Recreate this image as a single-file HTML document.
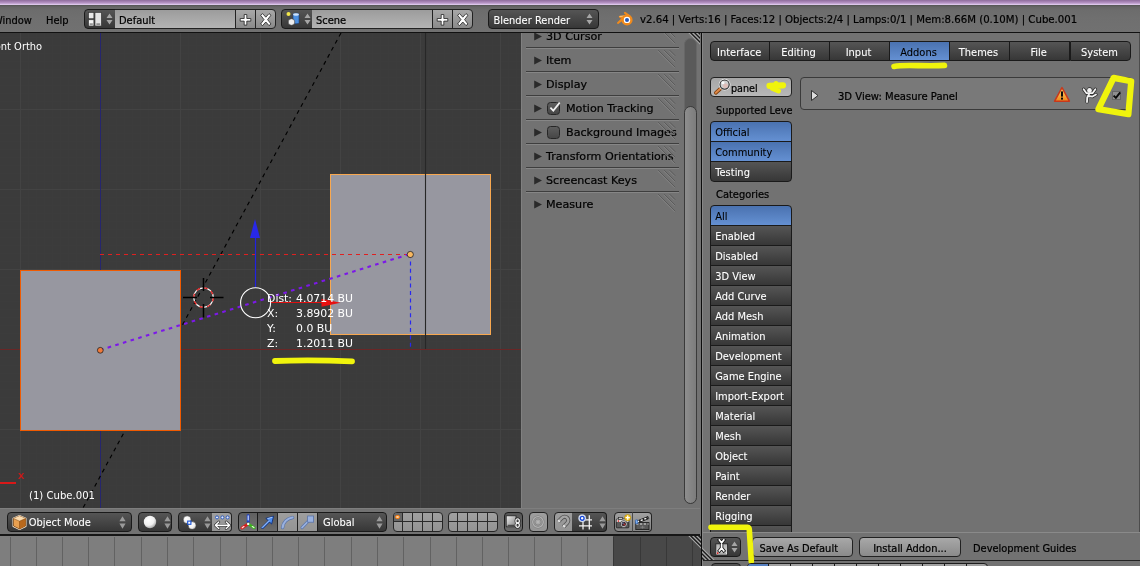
<!DOCTYPE html>
<html><head><meta charset="utf-8"><title>Blender</title>
<style>
html,body{margin:0;padding:0;}
body{width:1140px;height:566px;overflow:hidden;position:relative;background:#727272;font-family:"DejaVu Sans","Liberation Sans",sans-serif;font-size:9.9px;color:#000;-webkit-text-stroke:0.22px;}
.abs{position:absolute;}
#all{position:absolute;left:0;top:0;width:1140px;height:566px;overflow:hidden;filter:blur(0.3px);}
#topband{left:0;top:0;width:1140px;height:5px;background:linear-gradient(#8e6c9c,#b795c6 60%,#dcc6ea 90%,#9a86a4);}
#tophead{left:0;top:5px;width:1140px;height:27px;background:linear-gradient(#545454,#666 2px,#6c6c6c 5px,#6f6f6f 12px,#717171 27px);box-sizing:border-box;}
#topline{left:0;top:31.7px;width:1140px;height:1.6px;background:#111;}
#view3d{left:0;top:33px;width:700px;height:475.5px;background:#3b3b3b;overflow:hidden;}
.w{position:absolute;box-sizing:border-box;border:1px solid #222;height:20px;line-height:21px;font-size:9.9px;white-space:nowrap;overflow:hidden;will-change:transform;}
.menu{background:linear-gradient(#555,#373737);color:#fff;border-color:#1a1a1a;-webkit-text-stroke:0.08px;}
.sel{background:linear-gradient(#4a72b0,#6490d2);color:#000;}
.txt{background:linear-gradient(#9c9c9c,#b4b4b4);color:#000;}
.tool{background:linear-gradient(#a8a8a8,#8a8a8a);color:#000;}
.tog{background:linear-gradient(#a8a8a8,#8a8a8a);}
.rl{border-radius:4px 0 0 4px;}
.rr{border-radius:0 4px 4px 0;}
.ra{border-radius:4px;}
.lbl{position:absolute;white-space:nowrap;font-size:9.9px;line-height:12px;will-change:transform;}
</style></head>
<body><div id="all">
<div id="topband" class="abs"></div>
<div id="tophead" class="abs"></div>
<div id="topline" class="abs"></div>


<div class="lbl" style="left:-7.2px;top:15px;">Window</div>
<div class="lbl" style="left:46.3px;top:15px;">Help</div>
<div class="w menu rl" style="left:83.5px;top:9px;width:32px;"></div>
<svg class="abs" style="left:88.3px;top:11.8px" width="15" height="14.5" viewBox="0 0 14 14" preserveAspectRatio="none"><rect x="0.5" y="0.5" width="5" height="6" fill="#e8e8e8" stroke="#333" stroke-width="0.6"/><rect x="0.5" y="7.5" width="5" height="6" fill="#f4f4f4" stroke="#333" stroke-width="0.6"/><rect x="6.5" y="0.5" width="6" height="13" fill="#e4e4e4" stroke="#333" stroke-width="0.6"/><rect x="1.5" y="11.2" width="3" height="0.9" fill="#444"/><rect x="7.8" y="11.2" width="3.6" height="0.9" fill="#444"/></svg>
<svg class="abs" style="left:105.5px;top:13px" width="7" height="12" viewBox="0 0 7 12"><path d="M3.5 0.5L6.5 5H0.5Z M3.5 11.5L6.5 7H0.5Z" fill="#a6a6a6"/></svg>
<div class="w txt" style="left:114.5px;top:9px;width:121px;padding-left:4px;border-left:none">Default</div>
<div class="w tool" style="left:234.5px;top:9px;width:21px;"></div>
<div class="w tool rr" style="left:254.5px;top:9px;width:20.5px;"></div>
<svg class="abs" style="left:238.5px;top:12.5px" width="34" height="14" viewBox="0 0 34 14"><path d="M5.2 1.5h2.6v4h4v2.6h-4v4h-2.6v-4h-4v-2.6h4z" fill="#fff" stroke="#222" stroke-width="0.8"/><path d="M21.6 2.2l2-1.6 3.2 3.6 3.2-3.6 2 1.6-3.4 4.4 3.4 4.4-2 1.6-3.2-3.6-3.2 3.6-2-1.6 3.4-4.4z" fill="#fff" stroke="#222" stroke-width="0.8"/></svg>
<div class="w menu rl" style="left:280.5px;top:9px;width:32px;"></div>
<svg class="abs" style="left:285.5px;top:11px" width="16" height="16" viewBox="0 0 16 16"><circle cx="2.5" cy="3" r="2" fill="#f2e64a"/><path d="M7 3.5a3 1.3 0 0 1 6 0v8a3 1.3 0 0 1-6 0z" fill="#4c8fe0" stroke="#1b3f7a" stroke-width="0.6"/><ellipse cx="10" cy="3.5" rx="3" ry="1.3" fill="#cfe2fa"/><circle cx="5.5" cy="11" r="3.3" fill="#eee" stroke="#333" stroke-width="0.6"/></svg>
<svg class="abs" style="left:303.5px;top:13px" width="7" height="12" viewBox="0 0 7 12"><path d="M3.5 0.5L6.5 5H0.5Z M3.5 11.5L6.5 7H0.5Z" fill="#a6a6a6"/></svg>
<div class="w txt" style="left:311.5px;top:9px;width:121px;padding-left:4px;border-left:none">Scene</div>
<div class="w tool" style="left:431.5px;top:9px;width:21px;"></div>
<div class="w tool rr" style="left:451.5px;top:9px;width:20.5px;"></div>
<svg class="abs" style="left:435.5px;top:12.5px" width="34" height="14" viewBox="0 0 34 14"><path d="M5.2 1.5h2.6v4h4v2.6h-4v4h-2.6v-4h-4v-2.6h4z" fill="#fff" stroke="#222" stroke-width="0.8"/><path d="M21.6 2.2l2-1.6 3.2 3.6 3.2-3.6 2 1.6-3.4 4.4 3.4 4.4-2 1.6-3.2-3.6-3.2 3.6-2-1.6 3.4-4.4z" fill="#fff" stroke="#222" stroke-width="0.8"/></svg>
<div class="w menu ra" style="left:488px;top:9px;width:111px;padding-left:4.5px;">Blender Render</div>
<svg class="abs" style="left:586px;top:13px" width="7" height="12" viewBox="0 0 7 12"><path d="M3.5 0.5L6.5 5H0.5Z M3.5 11.5L6.5 7H0.5Z" fill="#a6a6a6"/></svg>
<svg class="abs" style="left:616px;top:10px" width="20" height="20" viewBox="0 0 20 20"><g stroke="#f08a1c" stroke-width="2.1" stroke-linecap="round" stroke-linejoin="round" fill="#f08a1c"><path d="M9 2.9L13.6 6.3"/><path d="M3.9 6.7L10.5 6.2L6.6 9.4L2 12.9L7 8.2Z"/></g><path d="M4 6.4L9.6 6" stroke="#ffd9a0" stroke-width="0.8" stroke-linecap="round"/><circle cx="11" cy="9.9" r="4.4" fill="#fff" stroke="#f08a1c" stroke-width="2.4"/><circle cx="11" cy="9.9" r="2" fill="#2458b8"/></svg>
<div class="lbl" style="left:640px;top:14px;font-size:10.16px;">v2.64 | Verts:16 | Faces:12 | Objects:2/4 | Lamps:0/1 | Mem:8.66M (0.10M) | Cube.001</div>

<div id="view3d" class="abs">
<svg class="abs" style="left:0;top:0" width="700" height="475" viewBox="0 33 700 475">
<path d="M28.5 33V508M36.5 33V508M44.5 33V508M52.5 33V508M60.5 33V508M68.5 33V508M76.5 33V508M84.5 33V508M92.5 33V508M108.5 33V508M116.5 33V508M124.5 33V508M132.5 33V508M140.5 33V508M148.5 33V508M156.5 33V508M164.5 33V508M172.5 33V508M188.5 33V508M196.5 33V508M204.5 33V508M212.5 33V508M220.5 33V508M228.5 33V508M236.5 33V508M244.5 33V508M252.5 33V508M268.5 33V508M276.5 33V508M284.5 33V508M292.5 33V508M300.5 33V508M308.5 33V508M316.5 33V508M324.5 33V508M332.5 33V508M348.5 33V508M356.5 33V508M364.5 33V508M372.5 33V508M380.5 33V508M388.5 33V508M396.5 33V508M404.5 33V508M412.5 33V508M428.5 33V508M436.5 33V508M444.5 33V508M452.5 33V508M460.5 33V508M468.5 33V508M476.5 33V508M484.5 33V508M492.5 33V508M508.5 33V508M516.5 33V508M0 37.5H522M0 45.5H522M0 53.5H522M0 61.5H522M0 69.5H522M0 77.5H522M0 85.5H522M0 93.5H522M0 101.5H522M0 117.5H522M0 125.5H522M0 133.5H522M0 141.5H522M0 149.5H522M0 157.5H522M0 165.5H522M0 173.5H522M0 181.5H522M0 197.5H522M0 205.5H522M0 213.5H522M0 221.5H522M0 229.5H522M0 237.5H522M0 245.5H522M0 253.5H522M0 261.5H522M0 277.5H522M0 285.5H522M0 293.5H522M0 301.5H522M0 309.5H522M0 317.5H522M0 325.5H522M0 333.5H522M0 341.5H522M0 357.5H522M0 365.5H522M0 373.5H522M0 381.5H522M0 389.5H522M0 397.5H522M0 405.5H522M0 413.5H522M0 421.5H522M0 437.5H522M0 445.5H522M0 453.5H522M0 461.5H522M0 469.5H522M0 477.5H522M0 485.5H522M0 493.5H522M0 501.5H522" stroke="#3c3c3c" stroke-width="1" fill="none"/>
<path d="M20.5 33V508M180.5 33V508M260.5 33V508M340.5 33V508M420.5 33V508M500.5 33V508M0 109.5H522M0 189.5H522M0 269.5H522M0 429.5H522" stroke="#434343" stroke-width="1" fill="none"/>
<path d="M0 349.5H522" stroke="#6a2626" stroke-width="1"/>
<path d="M100.5 33V508" stroke="#26266e" stroke-width="1"/>
<path d="M341 33L83 508" stroke="#000" stroke-width="1.15" stroke-dasharray="4 4" fill="none"/>
<rect x="20.5" y="270.5" width="160" height="160" fill="#9797a0" stroke="#f05a00" stroke-width="1"/>
<rect x="330.5" y="174.5" width="160" height="160" fill="#9797a0" stroke="#f8a850" stroke-width="1"/>
<path d="M425.5 33V349" stroke="#272727" stroke-width="1.1"/>
<path d="M100 254.5H410" stroke="#e02020" stroke-width="1" stroke-dasharray="4 4"/>
<path d="M410.5 254V349" stroke="#2828f0" stroke-width="1.2" stroke-dasharray="4 3.4"/>
<path d="M100 350L410 254" stroke="#7c18e8" stroke-width="2.1" stroke-dasharray="3.6 4.4"/>
<circle cx="100.3" cy="350.3" r="2.9" fill="#f07838" stroke="#222" stroke-width="0.8"/>
<circle cx="410.3" cy="254.5" r="3.1" fill="#f8b860" stroke="#222" stroke-width="0.8"/>
<path d="M255.5 287V236" stroke="#2222e0" stroke-width="1.2"/><path d="M255 219L260 238H250Z" fill="#2828e8"/>
<path d="M270 302.5H322" stroke="#e01010" stroke-width="1.2"/><path d="M340.5 302.8L321.5 298.8V306.8Z" fill="#e81010"/>
<circle cx="255.6" cy="302.7" r="15" fill="none" stroke="#fff" stroke-width="1.1"/>
<circle cx="203.5" cy="297.6" r="9.8" fill="none" stroke="#fff" stroke-width="1.2"/><circle cx="203.5" cy="297.6" r="9.8" fill="none" stroke="#e01010" stroke-width="1.2" stroke-dasharray="3.85 3.85"/>
<path d="M183 297.6H197M210 297.6H223.5M203.5 278V291M203.5 304V317.5" stroke="#000" stroke-width="1.5"/>
<path d="M0 483H16" stroke="#d81818" stroke-width="2"/>
<path d="M275 361 Q310 359.8 352 361.3" stroke="#f0f40c" stroke-width="5.8" stroke-linecap="round" fill="none"/>
</svg>
<div class="lbl" style="left:-14.3px;top:8.2px;color:#fff;font-size:9.9px;-webkit-text-stroke:0;">Front Ortho</div>
<div class="lbl" style="left:29px;top:456.5px;color:#fff;font-size:10.1px;-webkit-text-stroke:0;">(1) Cube.001</div>
<div class="lbl" style="left:267px;top:259.7px;color:#fff;font-size:10.9px;-webkit-text-stroke:0;">Dist:</div>
<div class="lbl" style="left:296px;top:259.7px;color:#fff;font-size:10.9px;-webkit-text-stroke:0;">4.0714 BU</div>
<div class="lbl" style="left:267px;top:274.7px;color:#fff;font-size:10.9px;-webkit-text-stroke:0;">X:</div>
<div class="lbl" style="left:296px;top:274.7px;color:#fff;font-size:10.9px;-webkit-text-stroke:0;">3.8902 BU</div>
<div class="lbl" style="left:267px;top:289.7px;color:#fff;font-size:10.9px;-webkit-text-stroke:0;">Y:</div>
<div class="lbl" style="left:296px;top:289.7px;color:#fff;font-size:10.9px;-webkit-text-stroke:0;">0.0 BU</div>
<div class="lbl" style="left:267px;top:304.7px;color:#fff;font-size:10.9px;-webkit-text-stroke:0;">Z:</div>
<div class="lbl" style="left:296px;top:304.7px;color:#fff;font-size:10.9px;-webkit-text-stroke:0;">1.2011 BU</div>
<div class="lbl" style="left:18.3px;top:437px;color:#d81818;font-size:11px;">x</div>
<div class="abs" style="left:521px;top:0;width:179px;height:476px;background:#727272;border-left:1px solid #808080;box-sizing:border-box;"></div>
<div class="abs" style="left:526px;top:14.0px;width:153px;height:1px;background:#3e3e3e;"></div>
<div class="abs" style="left:526px;top:15.0px;width:153px;height:1px;background:#868686;"></div>
<svg class="abs" style="left:534px;top:-1.5px" width="9" height="9" viewBox="0 0 9 9"><path d="M0.2 0.4L8 4.4L0.2 8.4Z" fill="#2a2a2a"/></svg>
<div class="lbl" style="left:546px;top:-3.1px;font-size:11.15px;line-height:14px;color:#000">3D Cursor</div>
<svg class="abs" style="left:657px;top:-7.8px" width="20" height="20" viewBox="0 0 20 20"><path d="M0.6 1.8L17.6 18.8M6.6 1.8L17.6 12.8M12.1 1.8L17.6 7.3" stroke="#868686" stroke-width="0.9"/><path d="M1.2 1.2L18.2 18.2M7.2 1.2L18.2 12.2M12.7 1.2L18.2 6.7" stroke="#585858" stroke-width="0.9"/></svg>
<div class="abs" style="left:526px;top:38.0px;width:153px;height:1px;background:#3e3e3e;"></div>
<div class="abs" style="left:526px;top:39.0px;width:153px;height:1px;background:#868686;"></div>
<svg class="abs" style="left:534px;top:22.5px" width="9" height="9" viewBox="0 0 9 9"><path d="M0.2 0.4L8 4.4L0.2 8.4Z" fill="#2a2a2a"/></svg>
<div class="lbl" style="left:546px;top:20.9px;font-size:11.15px;line-height:14px;color:#000">Item</div>
<svg class="abs" style="left:657px;top:16.2px" width="20" height="20" viewBox="0 0 20 20"><path d="M0.6 1.8L17.6 18.8M6.6 1.8L17.6 12.8M12.1 1.8L17.6 7.3" stroke="#868686" stroke-width="0.9"/><path d="M1.2 1.2L18.2 18.2M7.2 1.2L18.2 12.2M12.7 1.2L18.2 6.7" stroke="#585858" stroke-width="0.9"/></svg>
<div class="abs" style="left:526px;top:62.1px;width:153px;height:1px;background:#3e3e3e;"></div>
<div class="abs" style="left:526px;top:63.1px;width:153px;height:1px;background:#868686;"></div>
<svg class="abs" style="left:534px;top:46.5px" width="9" height="9" viewBox="0 0 9 9"><path d="M0.2 0.4L8 4.4L0.2 8.4Z" fill="#2a2a2a"/></svg>
<div class="lbl" style="left:546px;top:44.9px;font-size:11.15px;line-height:14px;color:#000">Display</div>
<svg class="abs" style="left:657px;top:40.2px" width="20" height="20" viewBox="0 0 20 20"><path d="M0.6 1.8L17.6 18.8M6.6 1.8L17.6 12.8M12.1 1.8L17.6 7.3" stroke="#868686" stroke-width="0.9"/><path d="M1.2 1.2L18.2 18.2M7.2 1.2L18.2 12.2M12.7 1.2L18.2 6.7" stroke="#585858" stroke-width="0.9"/></svg>
<div class="abs" style="left:526px;top:86.1px;width:153px;height:1px;background:#3e3e3e;"></div>
<div class="abs" style="left:526px;top:87.1px;width:153px;height:1px;background:#868686;"></div>
<svg class="abs" style="left:534px;top:70.5px" width="9" height="9" viewBox="0 0 9 9"><path d="M0.2 0.4L8 4.4L0.2 8.4Z" fill="#2a2a2a"/></svg>
<div class="abs" style="left:546.5px;top:68.5px;width:13.5px;height:13.5px;box-sizing:border-box;border:1px solid #262626;border-radius:3.5px;background:linear-gradient(#5e5e5e,#464646);"></div>
<svg class="abs" style="left:546.5px;top:66.5px" width="16" height="16" viewBox="0 0 16 16"><path d="M3.4 7.6L6.3 10.6L12.7 2.6" stroke="#f0f0f0" stroke-width="1.7" fill="none"/></svg>
<div class="lbl" style="left:566px;top:68.9px;font-size:11.15px;line-height:14px;color:#000">Motion Tracking</div>
<svg class="abs" style="left:657px;top:64.2px" width="20" height="20" viewBox="0 0 20 20"><path d="M0.6 1.8L17.6 18.8M6.6 1.8L17.6 12.8M12.1 1.8L17.6 7.3" stroke="#868686" stroke-width="0.9"/><path d="M1.2 1.2L18.2 18.2M7.2 1.2L18.2 12.2M12.7 1.2L18.2 6.7" stroke="#585858" stroke-width="0.9"/></svg>
<div class="abs" style="left:526px;top:110.1px;width:153px;height:1px;background:#3e3e3e;"></div>
<div class="abs" style="left:526px;top:111.1px;width:153px;height:1px;background:#868686;"></div>
<svg class="abs" style="left:534px;top:94.5px" width="9" height="9" viewBox="0 0 9 9"><path d="M0.2 0.4L8 4.4L0.2 8.4Z" fill="#2a2a2a"/></svg>
<div class="abs" style="left:546.5px;top:92.5px;width:13.5px;height:13.5px;box-sizing:border-box;border:1px solid #262626;border-radius:3.5px;background:linear-gradient(#5e5e5e,#464646);"></div>
<div class="lbl" style="left:566px;top:92.9px;font-size:11.15px;line-height:14px;color:#000">Background Images</div>
<svg class="abs" style="left:657px;top:88.2px" width="20" height="20" viewBox="0 0 20 20"><path d="M0.6 1.8L17.6 18.8M6.6 1.8L17.6 12.8M12.1 1.8L17.6 7.3" stroke="#868686" stroke-width="0.9"/><path d="M1.2 1.2L18.2 18.2M7.2 1.2L18.2 12.2M12.7 1.2L18.2 6.7" stroke="#585858" stroke-width="0.9"/></svg>
<div class="abs" style="left:526px;top:134.2px;width:153px;height:1px;background:#3e3e3e;"></div>
<div class="abs" style="left:526px;top:135.2px;width:153px;height:1px;background:#868686;"></div>
<svg class="abs" style="left:534px;top:118.5px" width="9" height="9" viewBox="0 0 9 9"><path d="M0.2 0.4L8 4.4L0.2 8.4Z" fill="#2a2a2a"/></svg>
<div class="lbl" style="left:546px;top:116.9px;font-size:11.15px;line-height:14px;color:#000">Transform Orientations</div>
<svg class="abs" style="left:657px;top:112.2px" width="20" height="20" viewBox="0 0 20 20"><path d="M0.6 1.8L17.6 18.8M6.6 1.8L17.6 12.8M12.1 1.8L17.6 7.3" stroke="#868686" stroke-width="0.9"/><path d="M1.2 1.2L18.2 18.2M7.2 1.2L18.2 12.2M12.7 1.2L18.2 6.7" stroke="#585858" stroke-width="0.9"/></svg>
<div class="abs" style="left:526px;top:158.2px;width:153px;height:1px;background:#3e3e3e;"></div>
<div class="abs" style="left:526px;top:159.2px;width:153px;height:1px;background:#868686;"></div>
<svg class="abs" style="left:534px;top:142.5px" width="9" height="9" viewBox="0 0 9 9"><path d="M0.2 0.4L8 4.4L0.2 8.4Z" fill="#2a2a2a"/></svg>
<div class="lbl" style="left:546px;top:140.9px;font-size:11.15px;line-height:14px;color:#000">Screencast Keys</div>
<svg class="abs" style="left:657px;top:136.2px" width="20" height="20" viewBox="0 0 20 20"><path d="M0.6 1.8L17.6 18.8M6.6 1.8L17.6 12.8M12.1 1.8L17.6 7.3" stroke="#868686" stroke-width="0.9"/><path d="M1.2 1.2L18.2 18.2M7.2 1.2L18.2 12.2M12.7 1.2L18.2 6.7" stroke="#585858" stroke-width="0.9"/></svg>
<svg class="abs" style="left:534px;top:166.5px" width="9" height="9" viewBox="0 0 9 9"><path d="M0.2 0.4L8 4.4L0.2 8.4Z" fill="#2a2a2a"/></svg>
<div class="lbl" style="left:546px;top:164.9px;font-size:11.15px;line-height:14px;color:#000">Measure</div>
<svg class="abs" style="left:657px;top:160.2px" width="20" height="20" viewBox="0 0 20 20"><path d="M0.6 1.8L17.6 18.8M6.6 1.8L17.6 12.8M12.1 1.8L17.6 7.3" stroke="#868686" stroke-width="0.9"/><path d="M1.2 1.2L18.2 18.2M7.2 1.2L18.2 12.2M12.7 1.2L18.2 6.7" stroke="#585858" stroke-width="0.9"/></svg>
<div class="abs" style="left:684px;top:5px;width:13px;height:466px;box-sizing:border-box;border:1px solid #676767;border-radius:6.5px;background:#5a5a5a;"></div>
<div class="abs" style="left:684px;top:73px;width:13px;height:398px;box-sizing:border-box;border:1px solid #3a3a3a;border-radius:6.5px;background:linear-gradient(90deg,#8e8e8e,#7c7c7c);"></div>
<svg class="abs" style="left:687px;top:0px" width="14" height="14" viewBox="687 0 14 14"><clipPath id="c3d"><path d="M688 0H701V13Z"/></clipPath><g clip-path="url(#c3d)"><path d="M688 -1L702 13" stroke="#a2a2a2" stroke-width="1.45"/><path d="M690 -1L702 11" stroke="#1c1c1c" stroke-width="1.45"/><path d="M692 -1L702 9" stroke="#a2a2a2" stroke-width="1.45"/><path d="M694 -1L702 7" stroke="#1c1c1c" stroke-width="1.45"/><path d="M696 -1L702 5" stroke="#a2a2a2" stroke-width="1.45"/><path d="M698 -1L702 3" stroke="#1c1c1c" stroke-width="1.45"/></g></svg>
</div>
<div class="abs" style="left:700px;top:33px;width:1px;height:533px;background:#727272;"></div><div class="abs" style="left:701px;top:33px;width:1px;height:533px;background:#0c0c0c;"></div><div class="abs" style="left:702px;top:33px;width:1px;height:533px;background:#868686;"></div>
<div class="abs" style="left:703px;top:33px;width:437px;height:500px;background:#727272;"></div>
<div class="w menu rl" style="left:709.8px;top:41.2px;width:60.4px;height:20.4px;line-height:21.2px;text-align:center;padding-right:2px;">Interface</div>
<div class="w menu" style="left:769.2px;top:41.2px;width:61.1px;height:20.4px;line-height:21.2px;text-align:center;padding-right:2px;">Editing</div>
<div class="w menu" style="left:829.3px;top:41.2px;width:61.0px;height:20.4px;line-height:21.2px;text-align:center;padding-right:2px;">Input</div>
<div class="w menu sel" style="left:889.3px;top:41.2px;width:61.1px;height:20.4px;line-height:21.2px;text-align:center;padding-right:2px;">Addons</div>
<div class="w menu" style="left:949.4px;top:41.2px;width:60.9px;height:20.4px;line-height:21.2px;text-align:center;padding-right:2px;">Themes</div>
<div class="w menu" style="left:1009.3px;top:41.2px;width:61.3px;height:20.4px;line-height:21.2px;text-align:center;padding-right:2px;">File</div>
<div class="w menu rr" style="left:1069.6px;top:41.2px;width:61.0px;height:20.4px;line-height:21.2px;text-align:center;padding-right:2px;">System</div>
<svg class="abs" style="left:880px;top:56px" width="80" height="16" viewBox="880 56 80 16"><path d="M894 66.4 Q900 65.2 918 65.6 T944.5 65.4" stroke="#f0f40c" stroke-width="5.6" stroke-linecap="round" fill="none"/></svg>
<div class="w txt ra" style="left:710px;top:77.3px;width:81.6px;height:19.5px;line-height:21px;padding-left:20px;font-size:9.6px;border-radius:4px;background:linear-gradient(#a6a6a6,#b8b8b8)">panel</div>
<svg class="abs" style="left:713px;top:78px" width="19" height="18" viewBox="0 0 19 18"><path d="M2.8 14.8L7.5 10.6" stroke="#7a3a0a" stroke-width="3.6" stroke-linecap="round"/><path d="M2.8 14.8L7.5 10.6" stroke="#e08a48" stroke-width="2" stroke-linecap="round"/><circle cx="11.6" cy="6.6" r="5.1" fill="#d6d6d6" stroke="#f2f2f2" stroke-width="1.6"/><circle cx="11.6" cy="6.6" r="4.6" fill="#cfcfcf" stroke="#2a2a2a" stroke-width="1.1"/><circle cx="12.5" cy="7.8" r="2.4" fill="#e8b0a8" fill-opacity="0.6"/><circle cx="10" cy="4.8" r="1.5" fill="#fff" fill-opacity="0.9"/></svg>
<svg class="abs" style="left:762px;top:78px" width="28" height="20" viewBox="762 78 28 20"><path d="M769.5 85.8L783 85.3" stroke="#f0f40c" stroke-width="6.2" stroke-linecap="round" fill="none"/><path d="M776 84L776 83.6" stroke="#f0f40c" stroke-width="5" stroke-linecap="round"/><path d="M772.5 88.5L778.5 91" stroke="#f0f40c" stroke-width="5" stroke-linecap="round" fill="none"/></svg>
<div class="lbl" style="left:715.5px;top:105px;font-size:9.7px">Supported Leve</div>
<div class="w menu sel" style="left:709.8px;top:121px;width:82px;height:21px;padding-left:4.2px;border-radius:4px 4px 0 0;">Official</div>
<div class="w menu sel" style="left:709.8px;top:141px;width:82px;height:21px;padding-left:4.2px;">Community</div>
<div class="w menu" style="left:709.8px;top:161px;width:82px;height:21px;padding-left:4.2px;border-radius:0 0 4px 4px;">Testing</div>
<div class="lbl" style="left:715.5px;top:188.5px;">Categories</div>
<div class="w menu sel" style="left:709.8px;top:205px;width:82px;height:21px;padding-left:4.2px;border-radius:4px 4px 0 0;">All</div>
<div class="w menu" style="left:709.8px;top:225px;width:82px;height:21px;padding-left:4.2px;">Enabled</div>
<div class="w menu" style="left:709.8px;top:245px;width:82px;height:21px;padding-left:4.2px;">Disabled</div>
<div class="w menu" style="left:709.8px;top:265px;width:82px;height:21px;padding-left:4.2px;">3D View</div>
<div class="w menu" style="left:709.8px;top:285px;width:82px;height:21px;padding-left:4.2px;">Add Curve</div>
<div class="w menu" style="left:709.8px;top:305px;width:82px;height:21px;padding-left:4.2px;">Add Mesh</div>
<div class="w menu" style="left:709.8px;top:325px;width:82px;height:21px;padding-left:4.2px;">Animation</div>
<div class="w menu" style="left:709.8px;top:345px;width:82px;height:21px;padding-left:4.2px;">Development</div>
<div class="w menu" style="left:709.8px;top:365px;width:82px;height:21px;padding-left:4.2px;">Game Engine</div>
<div class="w menu" style="left:709.8px;top:385px;width:82px;height:21px;padding-left:4.2px;">Import-Export</div>
<div class="w menu" style="left:709.8px;top:405px;width:82px;height:21px;padding-left:4.2px;">Material</div>
<div class="w menu" style="left:709.8px;top:425px;width:82px;height:21px;padding-left:4.2px;">Mesh</div>
<div class="w menu" style="left:709.8px;top:445px;width:82px;height:21px;padding-left:4.2px;">Object</div>
<div class="w menu" style="left:709.8px;top:465px;width:82px;height:21px;padding-left:4.2px;">Paint</div>
<div class="w menu" style="left:709.8px;top:485px;width:82px;height:21px;padding-left:4.2px;">Render</div>
<div class="w menu" style="left:709.8px;top:505px;width:82px;height:21px;padding-left:4.2px;">Rigging</div>
<div class="w menu" style="left:709.8px;top:525px;width:82px;height:21px;padding-left:4.2px;">System</div>
<div class="abs" style="left:800px;top:77px;width:332px;height:32.6px;box-sizing:border-box;border:1px solid #3a3a3a;border-radius:4px;background:#797979;"></div>
<svg class="abs" style="left:810px;top:89px" width="10" height="13" viewBox="0 0 10 13"><path d="M1.5 1.5L8 6.5L1.5 11.5Z" fill="#ddd" stroke="#222" stroke-width="0.9"/></svg>
<div class="lbl" style="left:838px;top:90.5px;font-size:10.03px">3D View: Measure Panel</div>
<svg class="abs" style="left:1053px;top:85.5px" width="18" height="17" viewBox="0 0 18 17"><defs><linearGradient id="wg" x1="0" y1="0" x2="0" y2="1"><stop offset="0" stop-color="#fde070"/><stop offset="1" stop-color="#f08418"/></linearGradient></defs><path d="M9 1.6L16.4 15.2H1.6Z" fill="url(#wg)" stroke="#c8381c" stroke-width="1.5" stroke-linejoin="round"/><rect x="8" y="5.4" width="2" height="5.2" fill="#0c0c0c"/><rect x="8" y="11.6" width="2" height="2" fill="#0c0c0c"/></svg>
<svg class="abs" style="left:1081.5px;top:87px" width="17" height="17" viewBox="0 0 17 17"><g stroke="#2a2a2a" stroke-width="3.2" fill="none" stroke-linecap="round" stroke-linejoin="round"><circle cx="7.5" cy="3.4" r="1.5"/><path d="M1.6 2.2L4.5 6.2L10.5 6.2L13.4 2.2M7.5 6.2L5.2 10.5L5 15M6.2 9L10.5 9.6L14 7.5"/></g><g stroke="#f2f2f2" stroke-width="1.8" fill="none" stroke-linecap="round" stroke-linejoin="round"><circle cx="7.5" cy="3.4" r="1.5"/><path d="M1.6 2.2L4.5 6.2L10.5 6.2L13.4 2.2M7.5 6.2L5.2 10.5L5 15M6.2 9L10.5 9.6L14 7.5"/></g><circle cx="7.5" cy="3.4" r="1.7" fill="#f2f2f2"/></svg>
<div class="abs" style="left:1111.5px;top:90.5px;width:9.5px;height:9px;box-sizing:border-box;border:1px solid #666;background:#8e8e8e;"></div>
<svg class="abs" style="left:1110px;top:87.5px" width="14" height="14" viewBox="0 0 14 14"><path d="M3.6 7.6L5.9 9.9L10.2 4.4" stroke="#0a0a0a" stroke-width="1.9" fill="none"/></svg>
<svg class="abs" style="left:1085px;top:68px" width="55" height="58" viewBox="1085 68 55 58"><path d="M1113.6 77.9L1131.2 81.3L1128.4 114.2L1098.4 109.1Z" stroke="#f0f40c" stroke-width="6.2" stroke-linejoin="round" fill="none"/></svg>
<div class="abs" style="left:1139px;top:33px;width:1px;height:500px;background:#4c4c4c;"></div>
<div class="abs" style="left:703px;top:532px;width:437px;height:28px;background:#727272;border-top:1px solid #8a8a8a;box-sizing:border-box;"></div>
<div class="abs" style="left:703px;top:560px;width:437px;height:1px;background:#222;"></div>
<div class="abs" style="left:703px;top:561px;width:437px;height:5px;background:#727272;"></div>
<div class="w menu ra" style="left:710px;top:537px;width:30.5px;"></div>
<svg class="abs" style="left:714.5px;top:538.5px" width="14" height="17" viewBox="0 0 14 17"><defs><linearGradient id="lg2" x1="0" y1="0" x2="0" y2="1"><stop offset="0" stop-color="#b0b0b0"/><stop offset="1" stop-color="#e6e6e6"/></linearGradient></defs><rect x="0.8" y="4.8" width="11.8" height="11.2" fill="url(#lg2)" stroke="#262626" stroke-width="0.9"/><rect x="3.6" y="13.7" width="7.4" height="0.9" fill="#8a8a8a"/><circle cx="2.7" cy="14.1" r="0.9" fill="#e01010"/><path d="M4.4 1L6.6 3.8L8.8 1M6.6 3.8V9M4.4 11.8L6.6 9L8.8 11.8" stroke="#1a1a1a" stroke-width="3.4" fill="none" stroke-linejoin="miter" stroke-linecap="square"/><path d="M4.4 1L6.6 3.8L8.8 1M6.6 3.8V9M4.4 11.8L6.6 9L8.8 11.8" stroke="#ffffff" stroke-width="1.7" fill="none" stroke-linejoin="miter" stroke-linecap="square"/></svg>
<svg class="abs" style="left:731px;top:541px" width="7" height="12" viewBox="0 0 7 12"><path d="M3.5 0.5L6.5 5H0.5Z M3.5 11.5L6.5 7H0.5Z" fill="#a6a6a6"/></svg>
<div class="w tool ra" style="left:752px;top:537px;width:100.5px;text-align:center;padding-right:7px;">Save As Default</div>
<div class="w tool ra" style="left:858.5px;top:537px;width:102px;text-align:center;">Install Addon...</div>
<div class="lbl" style="left:973px;top:543px;font-size:9.85px">Development Guides</div>
<svg class="abs" style="left:700px;top:520px" width="60" height="46" viewBox="700 520 60 46"><path d="M711 527.2L747.5 527.2Q749.2 527.4 749.3 529.5L751.3 561.3" stroke="#f0f40c" stroke-width="5.6" stroke-linecap="round" stroke-linejoin="round" fill="none"/></svg>
<div class="abs" style="left:0;top:508.4px;width:700px;height:27px;background:#727272;border-top:1px solid #7e7e7e;box-sizing:border-box;"></div>
<div class="abs" style="left:0;top:533.9px;width:700px;height:1.8px;background:#161616;"></div>
<div class="abs" style="left:0;top:535.7px;width:612.5px;height:31px;background:#7e7e7e;"></div>
<div class="abs" style="left:612.5px;top:535.7px;width:88.5px;height:31px;background:#484848;"></div>
<svg class="abs" style="left:0;top:537px" width="700" height="29" viewBox="0 537 700 29"><path d="M10.5 537V566M36.5 537V566M62.5 537V566M88.5 537V566M114.5 537V566M141.5 537V566M167.5 537V566M193.5 537V566M220.5 537V566M246.5 537V566M272.5 537V566M298.5 537V566M324.5 537V566M351.5 537V566M377.5 537V566M403.5 537V566M430.5 537V566M456.5 537V566M482.5 537V566M508.5 537V566M534.5 537V566M561.5 537V566M587.5 537V566M613.5 537V566M640.5 537V566M666.5 537V566M692.5 537V566" stroke="#000" stroke-opacity="0.22" stroke-width="1"/></svg>
<div class="w menu ra" style="left:7.1px;top:512px;width:125.4px;height:20px;line-height:20.5px;padding-left:20.7px;">Object Mode</div>
<svg class="abs" style="left:119.0px;top:515.6px" width="7" height="13" viewBox="0 0 7 13"><path d="M3.5 0.3L6.6 5.2H0.4Z M3.5 12.7L6.6 7.6H0.4Z" fill="#9a9a9a"/></svg>
<svg class="abs" style="left:12px;top:514.5px" width="15" height="15" viewBox="0 0 15 15"><path d="M7.5 0.8L13.7 3.4V11.2L7.5 14.2L1.3 11.2V3.4Z" fill="#e8963c" stroke="#f6e6d0" stroke-width="1.6" stroke-linejoin="round"/><path d="M7.5 1L13.5 3.5V11L7.5 14L1.5 11V3.5Z" fill="#e8a050" stroke="#6a3a0a" stroke-width="0.7" stroke-linejoin="round"/><path d="M7.5 1L13.5 3.5L7.5 6.2L1.5 3.5Z" fill="#fbdcb0"/><path d="M7.5 6.2V14L13.5 11V3.5Z" fill="#b8681c"/><path d="M1.5 3.5L7.5 6.2L13.5 3.5M7.5 6.2V14" stroke="#7a4510" stroke-width="0.5" fill="none"/></svg>
<div class="w menu ra" style="left:138.29999999999998px;top:512px;width:34px;height:20px;line-height:20.5px;"></div>
<svg class="abs" style="left:143px;top:514.8px" width="14" height="14" viewBox="0 0 14 14"><defs><radialGradient id="sph" cx="0.38" cy="0.32" r="0.75"><stop offset="0" stop-color="#fff"/><stop offset="0.6" stop-color="#f0f0f0"/><stop offset="1" stop-color="#9a9a9a"/></radialGradient></defs><circle cx="7" cy="7" r="6.2" fill="url(#sph)"/></svg>
<svg class="abs" style="left:163.5px;top:515.6px" width="7" height="13" viewBox="0 0 7 13"><path d="M3.5 0.3L6.6 5.2H0.4Z M3.5 12.7L6.6 7.6H0.4Z" fill="#9a9a9a"/></svg>
<div class="w menu rl" style="left:178.29999999999998px;top:512px;width:34.5px;height:20px;line-height:20.5px;"></div>
<svg class="abs" style="left:182px;top:514.5px" width="16" height="16" viewBox="0 0 16 16"><circle cx="5.2" cy="4.8" r="4" fill="url(#sph)" stroke="#222" stroke-width="0.5"/><circle cx="10.2" cy="10.6" r="4" fill="url(#sph)" stroke="#222" stroke-width="0.5"/><rect x="5.7" y="6.1" width="3.2" height="3.2" fill="#fff" stroke="#1450d8" stroke-width="1.1"/></svg>
<svg class="abs" style="left:203.5px;top:515.6px" width="7" height="13" viewBox="0 0 7 13"><path d="M3.5 0.3L6.6 5.2H0.4Z M3.5 12.7L6.6 7.6H0.4Z" fill="#9a9a9a"/></svg>
<div class="w tog rr" style="left:212.29999999999998px;top:512px;width:20.2px;height:20px;line-height:20.5px;border-left:none;background:linear-gradient(#9e9e9e,#949494);"></div>
<svg class="abs" style="left:213.5px;top:514.5px" width="17" height="16" viewBox="0 0 17 16"><g fill="#e8eefc" stroke="#1e50c0" stroke-width="0.9"><circle cx="3" cy="2.4" r="1.5"/><circle cx="8.4" cy="2.4" r="1.5"/><circle cx="13.6" cy="2.4" r="1.5"/></g><g fill="none" stroke="#2a2a2a" stroke-width="2.6" stroke-linejoin="round" stroke-linecap="round"><path d="M1.5 10.3H15.5M4.8 7L1.3 10.3L4.8 13.6M12.2 7L15.7 10.3L12.2 13.6"/></g><g fill="none" stroke="#fff" stroke-width="1.4" stroke-linejoin="round" stroke-linecap="round"><path d="M1.5 10.3H15.5M4.8 7L1.3 10.3L4.8 13.6M12.2 7L15.7 10.3L12.2 13.6"/></g></svg>
<div class="w menu rl" style="left:238.29999999999998px;top:512px;width:19.8px;height:20px;line-height:20.5px;background:linear-gradient(#606060,#747474);"></div>
<div class="w menu" style="left:257.1px;top:512px;width:21px;height:20px;line-height:20.5px;background:linear-gradient(#565656,#6c6c6c);"></div>
<div class="w tog" style="left:277.1px;top:512px;width:21px;height:20px;line-height:20.5px;background:linear-gradient(#9e9e9e,#949494);"></div>
<div class="w tog" style="left:297.1px;top:512px;width:21px;height:20px;line-height:20.5px;background:linear-gradient(#9e9e9e,#949494);"></div>
<div class="w menu rr" style="left:317.1px;top:512px;width:70.3px;height:20px;line-height:20.5px;padding-left:5px;">Global</div>
<svg class="abs" style="left:375.5px;top:515.6px" width="7" height="13" viewBox="0 0 7 13"><path d="M3.5 0.3L6.6 5.2H0.4Z M3.5 12.7L6.6 7.6H0.4Z" fill="#9a9a9a"/></svg>
<svg class="abs" style="left:240px;top:514px" width="18" height="18" viewBox="0 0 18 18"><g stroke-linecap="round" fill="none"><path d="M8.2 1.6V9.9" stroke="#1a3ec8" stroke-width="2.8"/><path d="M8.2 9.9L1.9 14" stroke="#d81e1e" stroke-width="2.8"/><path d="M8.2 9.9L14.2 13.8" stroke="#3cb41e" stroke-width="2.8"/><path d="M8.2 1.8V6" stroke="#cfe0ff" stroke-width="1.2"/><path d="M2.2 13.8L4 12.6" stroke="#ffe0e0" stroke-width="1.2"/><path d="M13.9 13.6L12.3 12.6" stroke="#e4ffd8" stroke-width="1.2"/></g><circle cx="8.2" cy="9.9" r="1.2" fill="#f4f4f4"/></svg>
<svg class="abs" style="left:259px;top:514px" width="18" height="18" viewBox="0 0 18 18"><path d="M2.2 13.6L9.2 6.6L6.8 4.4L14.6 2.2L12.6 10.2L10.6 8L3.6 15Z" fill="#4f8ef0" stroke="#10307a" stroke-width="0.9" stroke-linejoin="round"/><path d="M3 13.6L10 6.6M8.4 4.6L13.4 3.2" stroke="#b8d4ff" stroke-width="0.9" fill="none"/></svg>
<svg class="abs" style="left:279px;top:514px" width="18" height="18" viewBox="0 0 18 18"><path d="M3.6 13.6C4 8.5 8 4.2 13.6 3.6" stroke="#5a74a8" stroke-width="3.4" fill="none" stroke-linecap="round"/><path d="M3.6 13.6C4 8.5 8 4.2 13.6 3.6" stroke="#9ab2e0" stroke-width="2" fill="none" stroke-linecap="round"/></svg>
<svg class="abs" style="left:299px;top:514px" width="18" height="18" viewBox="0 0 18 18"><path d="M3 13.6L9.4 7" stroke="#5a74a8" stroke-width="3" stroke-linecap="round"/><path d="M3 13.6L9.4 7" stroke="#9ab2e0" stroke-width="1.6" stroke-linecap="round"/><rect x="8.6" y="2" width="6" height="6.2" fill="#9ab2e0" stroke="#5a74a8" stroke-width="0.8"/></svg>
<div class="abs" style="left:393.2px;top:512px;width:49.6px;height:20px;box-sizing:border-box;border:1px solid #262626;border-radius:4px;background:linear-gradient(#a0a0a0,#939393);overflow:hidden;"><div class="abs" style="left:0;top:0;width:8.2px;height:8.7px;background:#676767;"></div><div class="abs" style="left:7.7px;top:0;width:1px;height:19px;background:#2a2a2a;"></div><div class="abs" style="left:17.9px;top:0;width:1px;height:19px;background:#2a2a2a;"></div><div class="abs" style="left:27.7px;top:0;width:1px;height:19px;background:#2a2a2a;"></div><div class="abs" style="left:37.6px;top:0;width:1px;height:19px;background:#2a2a2a;"></div><div class="abs" style="left:0;top:8.2px;width:50px;height:1px;background:#2a2a2a;"></div><div class="abs" style="left:1.3px;top:1.6px;width:4.6px;height:4.6px;box-sizing:border-box;border-radius:3px;background:#ffd0a0;border:1.4px solid #f07a10;"></div></div>
<div class="abs" style="left:448.4px;top:512px;width:49.2px;height:20px;box-sizing:border-box;border:1px solid #262626;border-radius:4px;background:linear-gradient(#a0a0a0,#939393);overflow:hidden;"><div class="abs" style="left:7.8px;top:0;width:1px;height:19px;background:#2a2a2a;"></div><div class="abs" style="left:17.7px;top:0;width:1px;height:19px;background:#2a2a2a;"></div><div class="abs" style="left:27.8px;top:0;width:1px;height:19px;background:#2a2a2a;"></div><div class="abs" style="left:37.8px;top:0;width:1px;height:19px;background:#2a2a2a;"></div><div class="abs" style="left:0;top:8.2px;width:50px;height:1px;background:#2a2a2a;"></div></div>
<div class="w menu ra" style="left:503.5px;top:512px;width:19.2px;height:20px;line-height:20.5px;background:linear-gradient(#565656,#6c6c6c);"></div>
<svg class="abs" style="left:505px;top:514px" width="16" height="16" viewBox="0 0 16 16"><defs><linearGradient id="lg1" x1="0" y1="0" x2="1" y2="1"><stop offset="0" stop-color="#f2f2f2"/><stop offset="1" stop-color="#7c7c7c"/></linearGradient></defs><rect x="1.2" y="1.8" width="9.8" height="11" fill="url(#lg1)" stroke="#222" stroke-width="0.8"/><rect x="2.6" y="10.8" width="6.4" height="1" fill="#333"/><g fill="none" stroke="#1e1e1e" stroke-width="2.6"><ellipse cx="12.6" cy="6.9" rx="1.7" ry="2.1"/><ellipse cx="12.6" cy="11.2" rx="1.7" ry="2.1"/></g><g fill="none" stroke="#f4f4f4" stroke-width="1.3"><ellipse cx="12.6" cy="6.9" rx="1.7" ry="2.1"/><ellipse cx="12.6" cy="11.2" rx="1.7" ry="2.1"/></g></svg>
<div class="w tog ra" style="left:528.5px;top:512px;width:19.2px;height:20px;line-height:20.5px;background:linear-gradient(#9e9e9e,#949494);"></div>
<svg class="abs" style="left:530.9px;top:514.7px" width="14" height="14" viewBox="0 0 14 14"><circle cx="7" cy="7" r="5.3" fill="none" stroke="#787878" stroke-width="2.2"/><circle cx="7" cy="7" r="5.3" fill="none" stroke="#b2b2b2" stroke-width="1.3"/><circle cx="7" cy="7" r="3" fill="#a8a8a8" stroke="#7c7c7c" stroke-width="0.6"/><circle cx="7" cy="7" r="1.2" fill="#b6b6b6"/></svg>
<div class="w tog rl" style="left:553.5px;top:512px;width:19.2px;height:20px;line-height:20.5px;background:linear-gradient(#9e9e9e,#949494);"></div>
<svg class="abs" style="left:555px;top:514px" width="18" height="18" viewBox="0 0 18 18"><path d="M3.3 7.6L7.12 3.72A3.65 3.65 0 0 1 12.28 8.88L8.4 12.8" stroke="#4e4e4e" stroke-width="4" fill="none"/><path d="M3.3 7.6L7.12 3.72A3.65 3.65 0 0 1 12.28 8.88L8.4 12.8" stroke="#a4a4a4" stroke-width="2.5" fill="none"/><path d="M3.3 7.6L4.6 6.3M8.4 12.8L9.7 11.5" stroke="#e4e4e4" stroke-width="2.5" fill="none"/></svg>
<div class="w menu rr" style="left:572.3000000000001px;top:512px;width:35.3px;height:20px;line-height:20.5px;border-left:none;"></div>
<svg class="abs" style="left:575px;top:514px" width="18" height="18" viewBox="0 0 18 18"><path d="M4 5.8H17M4 11.8H17M8 1.2V15.4M14.3 1.2V15.4" stroke="#f4f4f4" stroke-width="1.25"/><circle cx="7.2" cy="4.3" r="3.7" fill="#f6f6f6" stroke="#9ab0d8" stroke-width="0.5"/><circle cx="7.2" cy="4.3" r="1.9" fill="#fff" stroke="#1446d8" stroke-width="1.4"/></svg>
<svg class="abs" style="left:598.7px;top:515.6px" width="7" height="13" viewBox="0 0 7 13"><path d="M3.5 0.3L6.6 5.2H0.4Z M3.5 12.7L6.6 7.6H0.4Z" fill="#9a9a9a"/></svg>
<div class="w tog rl" style="left:613.7px;top:512px;width:19px;height:20px;line-height:20.5px;background:linear-gradient(#a0a0a0,#868686);"></div>
<div class="w tog rr" style="left:632.0px;top:512px;width:20.2px;height:20px;line-height:20.5px;border-left:1px solid #4a4a4a;background:linear-gradient(#a0a0a0,#868686);"></div>
<svg class="abs" style="left:615px;top:513.5px" width="18" height="18" viewBox="0 0 18 18"><rect x="1.3" y="5" width="12.6" height="8.8" rx="0.8" fill="#5a5a5a" stroke="#1c1c1c" stroke-width="0.8"/><rect x="1.7" y="5.4" width="11.8" height="2.6" fill="#dcdcdc"/><rect x="3.4" y="3.4" width="4.2" height="2" fill="#c8c8c8" stroke="#1c1c1c" stroke-width="0.6"/><circle cx="3.4" cy="7.1" r="0.8" fill="#e01818"/><circle cx="8.8" cy="10" r="3.4" fill="#e6e6e6" stroke="#1c1c1c" stroke-width="0.7"/><circle cx="8.8" cy="10" r="2.3" fill="#3a2a30"/><circle cx="9.4" cy="10.6" r="1" fill="#b03838"/><circle cx="8" cy="9.2" r="0.7" fill="#6a86c0"/><circle cx="12.7" cy="3.7" r="3.1" fill="#f0c020" stroke="#a88000" stroke-width="0.5"/><path d="M12.7 1.6V5.8M10.6 3.7H14.8" stroke="#fff" stroke-width="1.3"/></svg>
<svg class="abs" style="left:634px;top:513.5px" width="18" height="18" viewBox="0 0 18 18"><rect x="1.8" y="8.6" width="13.2" height="7" fill="#585858" stroke="#1a1a1a" stroke-width="0.8"/><path d="M2.2 10H14.6" stroke="#e8e8e8" stroke-width="1.2" stroke-dasharray="2.2 1.6"/><path d="M8.5 11.8V14.6M6.4 13.2H10.6" stroke="#808080" stroke-width="0.9"/><path d="M2 7.4L14 2.6L14.8 4.6L2.8 9.2Z" fill="#1a1a1a" stroke="#1a1a1a" stroke-width="0.9" stroke-linejoin="round"/><path d="M3 8L14.2 3.6" stroke="#f4f4f4" stroke-width="1.5" stroke-dasharray="2.2 1.7"/><path d="M1.4 6.2L3.2 5.6L4 9.6L1.6 10Z" fill="#7ab0f4" stroke="#1c4a9a" stroke-width="0.5"/></svg>
<svg class="abs" style="left:687px;top:536px" width="14" height="14" viewBox="687 536 14 14"><clipPath id="c701_536"><path d="M688 536H701V549Z"/></clipPath><g clip-path="url(#c701_536)"><path d="M688 535L702 549" stroke="#a2a2a2" stroke-width="1.45"/><path d="M690 535L702 547" stroke="#1c1c1c" stroke-width="1.45"/><path d="M692 535L702 545" stroke="#a2a2a2" stroke-width="1.45"/><path d="M694 535L702 543" stroke="#1c1c1c" stroke-width="1.45"/><path d="M696 535L702 541" stroke="#a2a2a2" stroke-width="1.45"/><path d="M698 535L702 539" stroke="#1c1c1c" stroke-width="1.45"/></g></svg>
<svg class="abs" style="left:702px;top:546px" width="14" height="14" viewBox="702 546 14 14"><clipPath id="c702_560"><path d="M702 547V560H715Z"/></clipPath><g clip-path="url(#c702_560)"><path d="M701 547L715 561" stroke="#a2a2a2" stroke-width="1.45"/><path d="M701 549L713 561" stroke="#1c1c1c" stroke-width="1.45"/><path d="M701 551L711 561" stroke="#a2a2a2" stroke-width="1.45"/><path d="M701 553L709 561" stroke="#1c1c1c" stroke-width="1.45"/><path d="M701 555L707 561" stroke="#a2a2a2" stroke-width="1.45"/><path d="M701 557L705 561" stroke="#1c1c1c" stroke-width="1.45"/></g></svg>
<div class="abs" style="left:711px;top:563px;width:30px;height:10px;border:1px solid #1c1c1c;border-radius:4px;background:linear-gradient(#555,#373737);box-sizing:border-box;"></div>
<div class="abs" style="left:747px;top:563px;width:241px;height:10px;border:1px solid #1c1c1c;border-radius:4px;background:linear-gradient(#a4a4a4,#8a8a8a);box-sizing:border-box;overflow:hidden;"><div class="abs" style="left:0;top:0;width:20px;height:10px;background:#5680c2;"></div></div>
<div class="abs" style="left:767.8px;top:563px;width:1px;height:4px;background:#1c1c1c;"></div><div class="abs" style="left:789.8px;top:563px;width:1px;height:4px;background:#1c1c1c;"></div><div class="abs" style="left:811.9px;top:563px;width:1px;height:4px;background:#1c1c1c;"></div><div class="abs" style="left:833.9px;top:563px;width:1px;height:4px;background:#1c1c1c;"></div><div class="abs" style="left:856.0px;top:563px;width:1px;height:4px;background:#1c1c1c;"></div><div class="abs" style="left:878.0px;top:563px;width:1px;height:4px;background:#1c1c1c;"></div><div class="abs" style="left:900.1px;top:563px;width:1px;height:4px;background:#1c1c1c;"></div><div class="abs" style="left:922.1px;top:563px;width:1px;height:4px;background:#1c1c1c;"></div><div class="abs" style="left:944.2px;top:563px;width:1px;height:4px;background:#1c1c1c;"></div><div class="abs" style="left:966.2px;top:563px;width:1px;height:4px;background:#1c1c1c;"></div>
</div></body></html>
